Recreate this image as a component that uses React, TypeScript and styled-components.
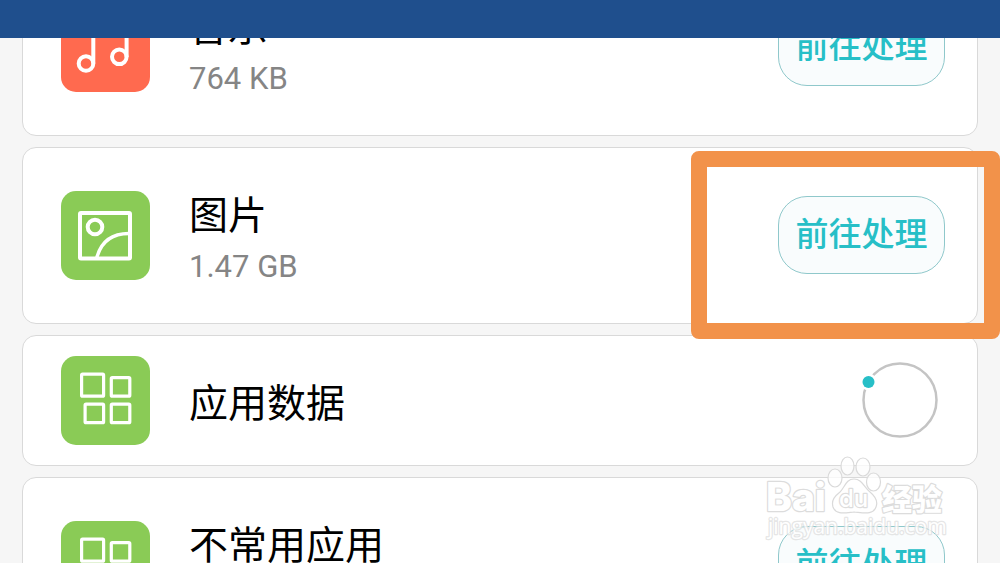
import React from "react";
import styled, { createGlobalStyle } from "styled-components";

const GlobalStyle = createGlobalStyle`
  * { box-sizing: border-box; }
  body {
    margin: 0;
    background: #f6f6f6;
    font-family: Roboto, "Noto Sans CJK SC", sans-serif;
  }
`;

const Page = styled.div`
  position: relative;
  display: flex;
  flex-direction: column;
  height: 100vh;
  overflow: hidden;
`;

const StatusBar = styled.header`
  position: relative;
  z-index: 1;
  flex: 0 0 38px;
  background: #1f4f8d;
`;

const Scroller = styled.main`
  flex: 1 1 0;
  min-height: 0;
  overflow: hidden;
`;

const List = styled.ul`
  display: flex;
  flex-direction: column;
  gap: 11px;
  margin: -79px 0 0;
  padding: 0 22px;
  list-style: none;
`;

const Card = styled.li<{ $compact?: boolean }>`
  position: relative;
  display: flex;
  align-items: center;
  gap: 39px;
  min-height: ${(p) => (p.$compact ? 131 : 177)}px;
  padding: 0 32px 0 38px;
  border: 1px solid #d9d9d9;
  border-radius: 14px;
  background: #fff;
`;

const IconTile = styled.div<{ $color: string }>`
  flex: none;
  width: 89px;
  height: 89px;
  border-radius: 15px;
  background: ${(p) => p.$color};

  svg {
    display: block;
    width: 100%;
    height: 100%;
  }
`;

const Info = styled.div`
  flex: 1;
  min-width: 0;
`;

const Title = styled.h2`
  margin: 0;
  padding-top: 6px;
  font-size: 39px;
  font-weight: 400;
  line-height: 58px;
  color: #000;
`;

const Size = styled.p`
  margin: 0;
  padding-bottom: 2px;
  font-size: 31px;
  line-height: 44px;
  color: #858585;
`;

const ActionButton = styled.button`
  flex: none;
  min-width: 167px;
  height: 78px;
  margin-bottom: 1px;
  padding: 0 16px;
  border: 1px solid #8fc8cb;
  border-radius: 29px;
  background: #f9fcfd;
  color: #27bfc7;
  font: inherit;
  font-size: 33px;
  font-weight: 500;
  line-height: 48px;
`;

const Spinner = styled.svg`
  flex: none;
  width: 78px;
  height: 78px;
  margin: 0 6px 2px 0;
`;

const Highlight = styled.div`
  position: absolute;
  z-index: 2;
  top: 3px;
  right: -23px;
  width: 309px;
  height: 188px;
  border: 16px solid #f2924a;
  border-radius: 8px;
  pointer-events: none;
`;

const Watermark = styled.svg`
  position: absolute;
  right: 50px;
  bottom: 18px;
  width: 190px;
  height: 95px;
  pointer-events: none;
`;

const MusicIcon = () => (
  <svg viewBox="0 0 89 89" fill="none" stroke="#fff" strokeWidth="4" aria-hidden="true">
    <circle cx="25" cy="60.5" r="7.3" />
    <circle cx="58.3" cy="53.8" r="7.3" />
    <path d="M32.3 60.5V23L65.6 16V54" />
  </svg>
);

const PictureIcon = () => (
  <svg viewBox="0 0 89 89" fill="none" stroke="#fff" strokeWidth="4" aria-hidden="true">
    <rect x="19" y="22" width="50" height="45.5" rx="1" />
    <circle cx="34" cy="36" r="7.3" />
    <path d="M35.5 68C39 53 49 42.5 68 42.5" strokeWidth="3.5" />
  </svg>
);

const AppsIcon = () => (
  <svg viewBox="0 0 89 89" fill="none" stroke="#fff" strokeWidth="3.2" aria-hidden="true">
    <rect x="20.6" y="18.2" width="22" height="22" rx="1" />
    <rect x="50.3" y="21.7" width="18.5" height="18.5" rx="1" />
    <rect x="24.1" y="48.2" width="18.5" height="18.5" rx="1" />
    <rect x="50.3" y="48.2" width="18.5" height="18.5" rx="1" />
  </svg>
);

const LoadingSpinner = () => (
  <Spinner viewBox="0 0 78 78" role="img" aria-label="loading">
    <circle cx="39" cy="39" r="36.5" fill="none" stroke="#c4c4c4" strokeWidth="2.5" />
    <circle cx="7.5" cy="21" r="8.5" fill="#fff" />
    <circle cx="7.5" cy="21" r="6" fill="#27bfc7" />
  </Spinner>
);

const BaiduWatermark = () => (
  <Watermark viewBox="0 0 190 95" aria-hidden="true">
    <g fill="#fff" fillOpacity="0.75" stroke="#dadada" strokeWidth="1.2">
      <ellipse cx="75" cy="28" rx="7" ry="9" />
      <ellipse cx="87.5" cy="16" rx="6.5" ry="9" />
      <ellipse cx="103" cy="17" rx="7" ry="9" />
      <ellipse cx="113.5" cy="32" rx="7" ry="9" />
      <path d="M94 29C102 29 104 37 110 42C116 47 118 52 116 57C113 65 105 63 94 62C84 63 76 65 73 57C71 50 75 46 80 42C85 37 86 29 94 29Z" />
    </g>
    <g fill="#fff" stroke="#dcdcdc" strokeWidth="2.4" paintOrder="stroke" strokeLinejoin="round">
      <text x="6" y="61" fontFamily="Inter, sans-serif" fontWeight="800" fontSize="39">Bai</text>
      <text x="79" y="57" fontFamily="Inter, sans-serif" fontWeight="500" fontSize="24">du</text>
      <text x="122" y="60" fontFamily="Noto Sans CJK SC, sans-serif" fontWeight="900" fontSize="30">经验</text>
      <text x="8" y="84" fontFamily="Open Sans, sans-serif" fontWeight="400" fontSize="21" stroke="#e0e0e0" opacity="0.8">jingyan.baidu.com</text>
    </g>
  </Watermark>
);

type Item = {
  title: string;
  size?: string;
  color: string;
  icon: React.ReactNode;
  loading?: boolean;
  highlighted?: boolean;
};

const GREEN = "#8acb56";

const items: Item[] = [
  { title: "音乐", size: "764 KB", color: "#ff6a4f", icon: <MusicIcon /> },
  { title: "图片", size: "1.47 GB", color: GREEN, icon: <PictureIcon />, highlighted: true },
  { title: "应用数据", color: GREEN, icon: <AppsIcon />, loading: true },
  { title: "不常用应用", size: "0 B", color: GREEN, icon: <AppsIcon /> },
];

export default function App() {
  return (
    <Page>
      <GlobalStyle />
      <StatusBar />
      <Scroller>
        <List>
          {items.map((item) => (
            <Card key={item.title} $compact={item.loading}>
              <IconTile $color={item.color}>{item.icon}</IconTile>
              <Info>
                <Title>{item.title}</Title>
                {item.size && <Size>{item.size}</Size>}
              </Info>
              {item.loading ? <LoadingSpinner /> : <ActionButton type="button">前往处理</ActionButton>}
              {item.highlighted && <Highlight />}
            </Card>
          ))}
        </List>
      </Scroller>
      <BaiduWatermark />
    </Page>
  );
}
